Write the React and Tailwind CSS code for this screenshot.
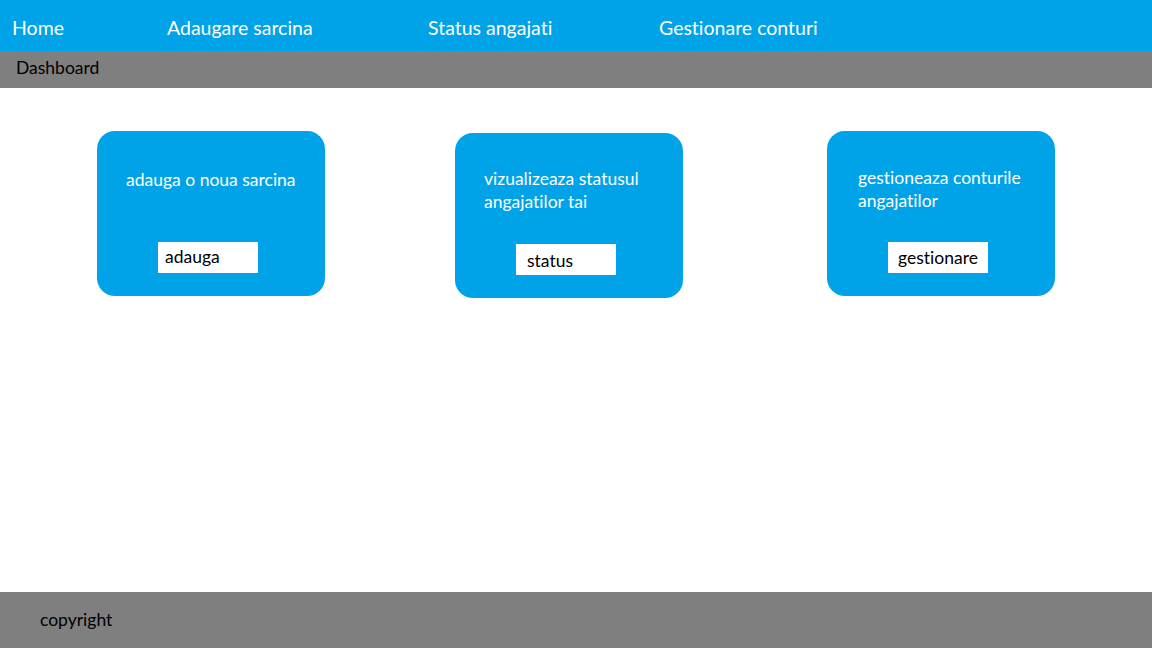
export default function App() {
  return (
    <div className="w-[1152px] h-[648px] flex flex-col bg-white font-['Lato',sans-serif] [font-variant-ligatures:none]">
      <header className="h-[51px] bg-[#00a3e8] flex items-start pt-[16px] text-white text-[19.5px] leading-[24px] shrink-0">
        <span className="ml-[12px] w-[155px]">Home</span>
        <span className="w-[261px]">Adaugare sarcina</span>
        <span className="w-[231px]">Status angajati</span>
        <span>Gestionare conturi</span>
      </header>
      <div className="h-[37px] bg-[#7f7f7f] flex items-start pt-[6px] text-black text-[17.5px] leading-[22px] pl-[16px] shrink-0">
        Dashboard
      </div>
      <main className="flex-1 flex items-start pt-[43px]">
        <div className="ml-[97px] w-[228px] h-[165px] rounded-[18px] bg-[#00a3e8] flex flex-col pt-[37px] pl-[29px]">
          <p className="text-white text-[17.5px] leading-[23px] h-[46px]">adauga o noua sarcina</p>
          <div className="mt-[28px] ml-[32px] w-[100px] h-[31px] bg-white text-black text-[17.5px] leading-[30px] pl-[7px]">adauga</div>
        </div>
        <div className="ml-[130px] mt-[2px] w-[228px] h-[165px] rounded-[18px] bg-[#00a3e8] flex flex-col pt-[34px] pl-[29px]">
          <p className="text-white text-[17.5px] leading-[23px] h-[46px]">vizualizeaza statusul<br />angajatilor tai</p>
          <div className="mt-[31px] ml-[32px] w-[100px] h-[31px] bg-white text-black text-[17.5px] leading-[33px] pl-[11px]">status</div>
        </div>
        <div className="ml-[144px] w-[228px] h-[165px] rounded-[18px] bg-[#00a3e8] flex flex-col pt-[35px] pl-[31px]">
          <p className="text-white text-[17.5px] leading-[23px] h-[46px]">gestioneaza conturile<br />angajatilor</p>
          <div className="mt-[30px] ml-[30px] w-[100px] h-[31px] bg-white text-black text-[17.5px] leading-[32px] pl-[10px]">gestionare</div>
        </div>
      </main>
      <footer className="h-[56px] bg-[#7f7f7f] flex items-center pl-[40px] text-black text-[17.5px] shrink-0">
        copyright
      </footer>
    </div>
  );
}
